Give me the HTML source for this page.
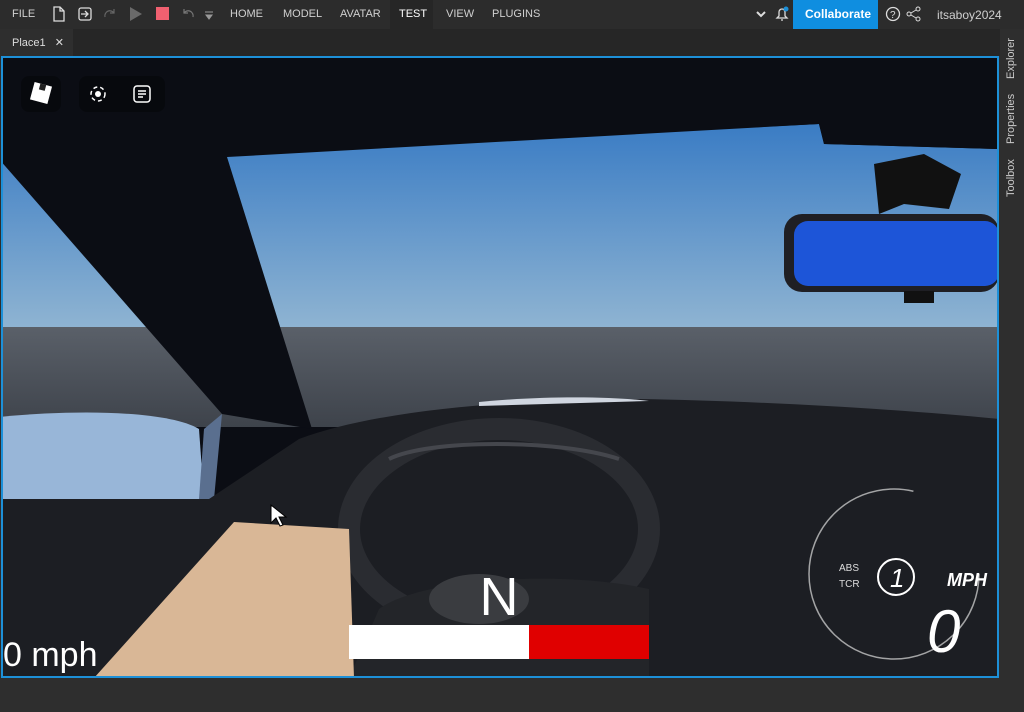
<!DOCTYPE html>
<html><head><meta charset="utf-8"><style>
*{margin:0;padding:0;box-sizing:border-box}
body{width:1024px;height:712px;background:#2e2e2e;font-family:"Liberation Sans",sans-serif;overflow:hidden;position:relative;color:#ddd}
.top{position:absolute;left:0;top:0;width:1024px;height:29px;background:#2c2c2c;font-size:11px}
.top span{position:absolute;top:8px;color:#d0d0d0}
.tabs{position:absolute;top:29px;left:0;width:1000px;height:27px;background:#262626}
.tab{position:absolute;left:0;top:0;width:73px;height:27px;background:#2e2e2e;font-size:11px;color:#ddd;padding:7px 0 0 12px}
.side{position:absolute;left:1000px;top:29px;width:24px;height:683px;background:#2e2e2e}
.side div{position:absolute;left:5px;font-size:11px;color:#ccc;transform:rotate(-90deg);transform-origin:left top;white-space:nowrap}
.vp{position:absolute;left:1px;top:56px;width:998px;height:622px;border:2px solid #1d90d8;overflow:hidden;background:#0b0d14}
</style></head><body>
<div class="top">
<span style="left:12px">FILE</span>
<svg style="position:absolute;left:52px;top:6px" width="14" height="16"><path d="M2 1h6l4 4v10H2z M8 1v4h4" fill="none" stroke="#ddd" stroke-width="1.3"/></svg>
<svg style="position:absolute;left:77px;top:6px" width="16" height="16"><rect x="2" y="2" width="12" height="12" rx="2" fill="none" stroke="#ddd" stroke-width="1.3"/><path d="M4 8h6M8 5l3 3-3 3" fill="none" stroke="#ddd" stroke-width="1.3"/></svg>
<svg style="position:absolute;left:103px;top:7px" width="14" height="14"><path d="M2 10a5 5 0 0 1 9-4M11 2v4h-4" fill="none" stroke="#666" stroke-width="1.2"/></svg>
<svg style="position:absolute;left:128px;top:6px" width="16" height="16"><path d="M2 1l12 7-12 7z" fill="#6a6a6a"/></svg>
<div style="position:absolute;left:156px;top:7px;width:13px;height:13px;background:#f06070"></div>
<svg style="position:absolute;left:181px;top:7px" width="14" height="14"><path d="M12 10a5 5 0 0 0-9-4M3 2v4h4" fill="none" stroke="#777" stroke-width="1.2"/></svg>
<svg style="position:absolute;left:204px;top:8px" width="10" height="12"><path d="M1 4h8M2 7h6l-3 4z" stroke="#999" fill="#999"/></svg>
<span style="left:230px">HOME</span><span style="left:283px">MODEL</span><span style="left:340px">AVATAR</span>
<div style="position:absolute;left:390px;top:0;width:43px;height:29px;background:#262626"></div>
<span style="left:399px;color:#fff">TEST</span><span style="left:446px">VIEW</span><span style="left:492px">PLUGINS</span>
<svg style="position:absolute;left:755px;top:9px" width="12" height="10"><path d="M2 3l4 4 4-4" fill="none" stroke="#ddd" stroke-width="2"/></svg>
<svg style="position:absolute;left:774px;top:5px" width="16" height="18"><path d="M3 13h10l-2-2V7a3 3 0 0 0-6 0v4zM7 15h2" fill="none" stroke="#ddd" stroke-width="1.3"/><circle cx="12" cy="4" r="2.5" fill="#1d90d8"/></svg>
<div style="position:absolute;left:793px;top:0;width:85px;height:29px;background:#0f8ee0;color:#fff;font-weight:bold;font-size:12px;padding:7px 0 0 12px">Collaborate</div>
<svg style="position:absolute;left:885px;top:6px" width="16" height="16"><circle cx="8" cy="8" r="6.5" fill="none" stroke="#ddd" stroke-width="1.3"/><text x="5" y="12" font-size="10" fill="#ddd" font-family="Liberation Sans">?</text></svg>
<svg style="position:absolute;left:906px;top:6px" width="16" height="16"><circle cx="12" cy="3" r="2" fill="none" stroke="#ddd"/><circle cx="3" cy="8" r="2" fill="none" stroke="#ddd"/><circle cx="12" cy="13" r="2" fill="none" stroke="#ddd"/><path d="M5 7l5-3M5 9l5 3" stroke="#ddd"/></svg>
<span style="left:937px;font-size:12px">itsaboy2024</span>
</div>
<div class="tabs"><div class="tab">Place1 <span style="margin-left:6px">✕</span></div></div>
<div class="side"><div style="top:50px">Explorer</div><div style="top:115px">Properties</div><div style="top:168px">Toolbox</div></div>
<div class="vp">
<svg width="998" height="622" viewBox="2 57 998 622" style="position:absolute;left:-2px;top:-2px">
<defs>
<linearGradient id="sky" x1="0" y1="0" x2="0" y2="1"><stop offset="0" stop-color="#3a7cc4"/><stop offset="1" stop-color="#8fb4d2"/></linearGradient>
<linearGradient id="sea" x1="0" y1="0" x2="0" y2="1"><stop offset="0" stop-color="#5a6069"/><stop offset="1" stop-color="#3e434b"/></linearGradient>
</defs>
<rect x="0" y="57" width="1000" height="622" fill="#0b0d14"/>
<polygon points="0,130 228,155 820,125 825,145 1000,150 1000,330 0,330" fill="url(#sky)"/>
<rect x="0" y="328" width="1000" height="100" fill="url(#sea)"/>
<polygon points="0,57 1000,57 1000,150 825,145 820,125 228,158 313,430 223,415 0,160" fill="#0b0d14"/>
<path d="M0,418 C80,410 170,412 200,430 L205,500 L0,502 Z" fill="#98b6d8"/>
<path d="M205,430 L223,415 L215,500 L200,500Z" fill="#5a6f8f"/>
<path d="M300,440 C380,410 520,400 640,400 C760,402 900,410 1000,420 L1000,679 L0,679 L0,500 L210,500 Z" fill="#1c1e23"/>
<path d="M480,403 C550,396 620,398 650,402 L480,407Z" fill="#d0d6e0"/>
<ellipse cx="500" cy="530" rx="150" ry="100" fill="none" stroke="#2a2c31" stroke-width="22"/>
<path d="M390,460 C430,440 560,440 620,460" fill="none" stroke="#45474d" stroke-width="4"/>
<path d="M380,610 C420,580 560,570 650,590 L650,679 L350,679Z" fill="#232529"/>
<ellipse cx="480" cy="600" rx="50" ry="25" fill="#3a3c40"/>
<polygon points="875,165 925,155 962,175 950,210 905,205 880,215" fill="#111"/>
<rect x="785" y="215" width="215" height="78" rx="18" fill="#1f1f24"/>
<rect x="795" y="222" width="205" height="65" rx="14" fill="#1d55d8"/>
<rect x="905" y="292" width="30" height="12" fill="#111"/>
<path d="M235,523 L350,530 L355,679 L95,679 Z" fill="#d9b796"/>
<path d="M272,506 l0,18 5,-5 4,8 3,-1 -4,-8 7,0z" fill="#fff" stroke="#000" stroke-width="1"/>
<circle cx="895" cy="575" r="85" fill="none" stroke="#ddd" stroke-width="1.5" opacity="0.7" stroke-dasharray="420 200"/>
<circle cx="897" cy="578" r="18" fill="none" stroke="#fff" stroke-width="2"/>
<rect x="350" y="626" width="180" height="34" fill="#fff"/>
<rect x="530" y="626" width="120" height="34" fill="#e00000"/>
<text x="500" y="616" font-size="54" fill="#fff" text-anchor="middle" font-family="Liberation Sans">N</text>
<text x="4" y="667" font-size="34" fill="#fff" font-family="Liberation Sans">0 mph</text>
<text x="840" y="572" font-size="10" fill="#ddd" font-family="Liberation Sans">ABS</text>
<text x="840" y="588" font-size="10" fill="#ddd" font-family="Liberation Sans">TCR</text>
<text x="891" y="588" font-size="26" fill="#fff" font-style="italic" font-family="Liberation Sans">1</text>
<text x="948" y="587" font-size="18" fill="#fff" font-style="italic" font-weight="bold" font-family="Liberation Sans">MPH</text>
<text x="928" y="653" font-size="60" fill="#fff" font-style="italic" font-family="Liberation Sans">0</text>
</svg>
<div style="position:absolute;left:18px;top:18px;width:40px;height:36px;border-radius:8px;background:rgba(0,0,0,.3)"><div style="margin:8px 11px;width:18px;height:18px;background:#fff;transform:rotate(15deg)"><div style="margin:6px;width:6px;height:6px;background:#222"></div></div></div>
<div style="position:absolute;left:76px;top:18px;width:86px;height:36px;border-radius:8px;background:rgba(0,0,0,.3)"></div>
<svg style="position:absolute;left:84px;top:25px" width="22" height="22"><circle cx="11" cy="11" r="7" fill="none" stroke="#fff" stroke-width="1.5" stroke-dasharray="4 3"/><circle cx="11" cy="11" r="3" fill="#fff"/></svg>
<svg style="position:absolute;left:128px;top:25px" width="22" height="22"><rect x="3" y="3" width="16" height="16" rx="3" fill="none" stroke="#fff" stroke-width="1.5"/><path d="M7 8h8M7 11h8M7 14h5" stroke="#fff" stroke-width="1.5"/></svg>
</div>
</body></html>
